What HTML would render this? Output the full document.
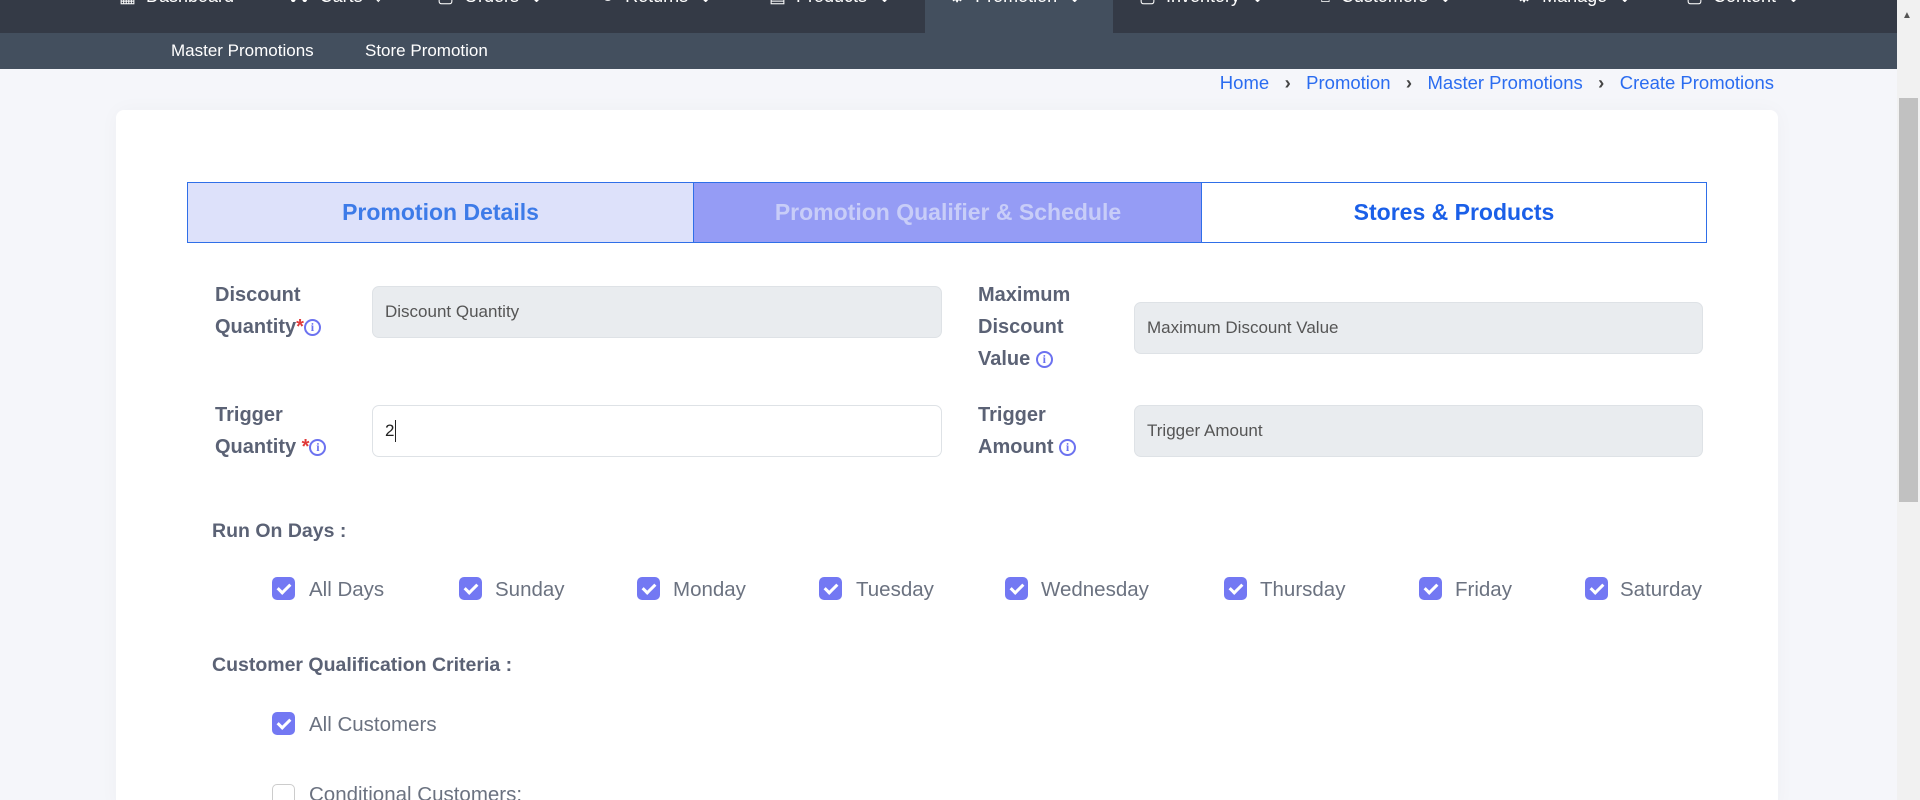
<!DOCTYPE html>
<html style="overflow:hidden"><head><meta charset="utf-8"><style>
*{box-sizing:border-box;margin:0;padding:0}
html,body{width:1920px;height:800px;overflow:hidden}
body{background:#f5f6fa;font-family:"Liberation Sans",sans-serif;position:relative}
.a{position:absolute}
#nav{left:0;top:0;width:1897px;height:33px;background:#343a46}
#sub{left:0;top:33px;width:1897px;height:36px;background:#434f5e}
.ni{position:absolute;top:-14px;color:#fff;font-size:18px;white-space:nowrap}
.sb{position:absolute;top:41px;color:#fff;font-size:17px}
#scroll{left:1897px;top:0;width:23px;height:800px;background:#f1f1f1}
.bc{color:#2a6cf0;font-size:18.5px}
#card{left:116px;top:110px;width:1662px;height:700px;background:#fff;border-radius:8px;box-shadow:0 0 20px rgba(0,0,0,.03)}
.tab{position:absolute;top:182px;height:61px;border:1.5px solid #2f6fe8;font-weight:bold;font-size:23px;display:flex;align-items:center;justify-content:center}
.lb{position:absolute;color:#5b6275;font-weight:bold;font-size:20px;line-height:32px}
.in{position:absolute;height:52px;border:1px solid #dee2e6;border-radius:7px;background:#e9ecef;font-size:17px;color:#555;padding-left:12px;display:flex;align-items:center}
.st{color:#e03a3a}
.inf{display:inline-block;width:17px;height:17px;border:2px solid #6c72f0;border-radius:50%;color:#6c72f0;font-size:12px;line-height:13px;text-align:center;vertical-align:middle;font-weight:bold;font-family:"Liberation Serif",serif}
.h{position:absolute;color:#5b6275;font-weight:bold;font-size:19.5px}
.cb{position:absolute;width:23px;height:23px;border-radius:5px;background:#7378f3}
.cb::after{content:"";position:absolute;left:8px;top:4px;width:5px;height:10px;border:solid #fff;border-width:0 3px 3px 0;transform:rotate(45deg)}
.cl{position:absolute;color:#6b7280;font-size:20.5px}
</style></head><body>
<div id="nav" class="a"></div>
<div class="a" style="left:925px;top:0;width:188px;height:69px;background:#434f5e"></div>
<div id="sub" class="a"></div>
<div class="ni" style="left:119px">▦ &nbsp;Dashboard</div>
<div class="ni" style="left:287px">⛟ &nbsp;Carts &nbsp;⌄</div>
<div class="ni" style="left:437px">▢ &nbsp;Orders &nbsp;⌄</div>
<div class="ni" style="left:600px">↻ &nbsp;Returns &nbsp;⌄</div>
<div class="ni" style="left:769px">▤ &nbsp;Products &nbsp;⌄</div>
<div class="ni" style="left:949px">⚙ &nbsp;Promotion &nbsp;⌄</div>
<div class="ni" style="left:1139px">▢ &nbsp;Inventory &nbsp;⌄</div>
<div class="ni" style="left:1320px">⌂ &nbsp;Customers &nbsp;⌄</div>
<div class="ni" style="left:1516px">⚙ &nbsp;Manage &nbsp;⌄</div>
<div class="ni" style="left:1686px">▢ &nbsp;Content &nbsp;⌄</div>
<div class="sb" style="left:171px">Master Promotions</div>
<div class="sb" style="left:365px">Store Promotion</div>
<div id="scroll" class="a"><div class="a" style="left:5px;top:10px;font-size:10px;color:#555">▲</div><div class="a" style="left:2px;top:98px;width:19px;height:404px;background:#c1c1c1"></div></div>
<div class="a bc" style="right:146px;top:72px;white-space:nowrap">Home &nbsp;&nbsp;<b style="color:#444">›</b>&nbsp;&nbsp; Promotion &nbsp;&nbsp;<b style="color:#444">›</b>&nbsp;&nbsp; Master Promotions &nbsp;&nbsp;<b style="color:#444">›</b>&nbsp;&nbsp; Create Promotions</div>
<div id="card" class="a"></div>
<div class="tab" style="left:187px;width:507px;background:#dde1fa;color:#3d7be8">Promotion Details</div>
<div class="tab" style="left:693px;width:510px;background:#959cf5;color:#c8cdf8">Promotion Qualifier &amp; Schedule</div>
<div class="tab" style="left:1201px;width:506px;background:#fff;color:#1a5fe8">Stores &amp; Products</div>

<div class="lb" style="left:215px;top:279px">Discount<br>Quantity<span class="st">*</span><span class="inf">i</span></div>
<div class="in" style="left:372px;top:286px;width:570px">Discount Quantity</div>
<div class="lb" style="left:978px;top:279px">Maximum<br>Discount<br>Value <span class="inf">i</span></div>
<div class="in" style="left:1134px;top:302px;width:569px">Maximum Discount Value</div>
<div class="lb" style="left:215px;top:399px">Trigger<br>Quantity <span class="st">*</span><span class="inf">i</span></div>
<div class="in" style="left:372px;top:405px;width:570px;background:#fff;color:#222">2<span style="display:inline-block;width:1px;height:22px;background:#222;margin-left:1px"></span></div>
<div class="lb" style="left:978px;top:399px">Trigger<br>Amount <span class="inf">i</span></div>
<div class="in" style="left:1134px;top:405px;width:569px">Trigger Amount</div>

<div class="h" style="left:212px;top:520px">Run On Days :</div>
<div class="cb" style="left:272px;top:577px"></div><div class="cl" style="left:309px;top:578px">All Days</div>
<div class="cb" style="left:459px;top:577px"></div><div class="cl" style="left:495px;top:578px">Sunday</div>
<div class="cb" style="left:637px;top:577px"></div><div class="cl" style="left:673px;top:578px">Monday</div>
<div class="cb" style="left:819px;top:577px"></div><div class="cl" style="left:856px;top:578px">Tuesday</div>
<div class="cb" style="left:1005px;top:577px"></div><div class="cl" style="left:1041px;top:578px">Wednesday</div>
<div class="cb" style="left:1224px;top:577px"></div><div class="cl" style="left:1260px;top:578px">Thursday</div>
<div class="cb" style="left:1419px;top:577px"></div><div class="cl" style="left:1455px;top:578px">Friday</div>
<div class="cb" style="left:1585px;top:577px"></div><div class="cl" style="left:1620px;top:578px">Saturday</div>

<div class="h" style="left:212px;top:654px">Customer Qualification Criteria :</div>
<div class="cb" style="left:272px;top:712px"></div><div class="cl" style="left:309px;top:713px">All Customers</div>
<div class="a" style="left:272px;top:784px;width:23px;height:23px;border:1px solid #ccc;border-radius:5px;background:#fff"></div><div class="cl" style="left:309px;top:783px">Conditional Customers:</div>
</body></html>
